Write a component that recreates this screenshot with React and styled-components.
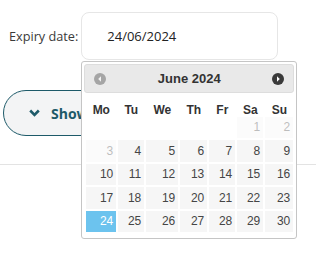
import React from 'react';
import styled, { createGlobalStyle } from 'styled-components';

const GlobalStyle = createGlobalStyle`
  body {
    margin: 0;
    background: #ffffff;
    font-family: "Open Sans", "Liberation Sans", sans-serif;
  }
`;

const Page = styled.div`
  position: relative;
  width: 316px;
  height: 265px;
  overflow: hidden;
`;

const FieldRow = styled.div`
  display: flex;
  align-items: center;
  gap: 3px;
  padding: 12px 0 0 9px;
`;

const Label = styled.label`
  font-size: 12.7px;
  color: #3a3a3a;
`;

const DateField = styled.div`
  position: relative;
`;

const DateInput = styled.div`
  box-sizing: border-box;
  width: 197px;
  height: 48px;
  display: flex;
  align-items: center;
  padding-left: 25px;
  border: 1px solid #e6e6e6;
  border-radius: 8px;
  font-size: 13px;
  color: #222;
`;

const ShowButton = styled.button`
  box-sizing: border-box;
  display: flex;
  align-items: center;
  gap: 11px;
  margin: 30px 0 0 3px;
  height: 46px;
  width: 160px;
  padding: 0 0 0 25px;
  border: 1px solid #1d5a69;
  border-radius: 23px;
  background: #f3f4f5;
  color: #1d5a69;
  font-family: "Open Sans", sans-serif;
  font-weight: 700;
  font-size: 14px;
`;

const Rule = styled.hr`
  margin: 28px 0 0;
  border: 0;
  border-top: 1px solid #e3e3e3;
`;

const Picker = styled.div`
  position: absolute;
  top: 49px;
  left: 0;
  box-sizing: border-box;
  width: 216px;
  padding: 2px 2px 6px;
  border: 1px solid #c5c5c5;
  border-radius: 3px;
  background: #fff;
  font-family: "Liberation Sans", Arial, sans-serif;
  z-index: 2;
`;

const PickerHeader = styled.div`
  box-sizing: border-box;
  height: 29px;
  display: flex;
  align-items: center;
  justify-content: space-between;
  padding: 0 9px;
  border: 1px solid #dddddd;
  border-radius: 3px;
  background: #e9e9e9;
  color: #333;
`;

const Title = styled.span`
  font-size: 13px;
  font-weight: 700;
`;

const NavIcon = styled.span`
  display: inline-flex;
  opacity: ${(p) => (p.disabled ? 0.45 : 1)};
`;

const Grid = styled.div`
  display: grid;
  grid-template-columns: 30px 26px 32px 27px 26px 26px 28px;
  grid-auto-rows: 21.5px;
  gap: 2px;
  margin: 0 0 0 2px;
  font-size: 12px;
`;

const DayName = styled.div`
  height: 34px;
  display: flex;
  align-items: center;
  justify-content: center;
  font-weight: 700;
  color: #333;
  margin-bottom: -1px;
`;

const DayCell = styled.div`
  display: flex;
  align-items: center;
  justify-content: flex-end;
  padding-right: 3px;
  background: ${(p) => (p.active ? '#6cc3ee' : '#f6f6f6')};
  color: ${(p) => (p.active ? '#ffffff' : '#454545')};
  opacity: ${(p) => (p.disabled ? 0.35 : 1)};
`;

const Blank = styled.div``;

const Arrow = ({ dir, color }) => (
  <svg width="12" height="12" viewBox="0 0 12 12">
    <circle cx="6" cy="6" r="6" fill={color} />
    {dir === 'left' ? (
      <path d="M7 3.2 L4.2 6 L7 8.8 Z" fill="#fff" />
    ) : (
      <path d="M5 3.2 L7.8 6 L5 8.8 Z" fill="#fff" />
    )}
  </svg>
);

const Chevron = () => (
  <svg width="11" height="8" viewBox="0 0 11 8">
    <path d="M1.2 1.5 L5.5 5.8 L9.8 1.5" fill="none" stroke="#1d5a69" strokeWidth="2.6" />
  </svg>
);

const DAYS = ['Mo', 'Tu', 'We', 'Th', 'Fr', 'Sa', 'Su'];

const App = () => {
  const cells = [];
  for (let i = 0; i < 5; i++) cells.push(<Blank key={`b${i}`} />);
  for (let d = 1; d <= 30; d++) {
    cells.push(
      <DayCell key={d} disabled={d < 4} active={d === 24}>
        {d}
      </DayCell>
    );
  }

  return (
    <Page>
      <GlobalStyle />
      <FieldRow>
        <Label>Expiry date:</Label>
        <DateField>
          <DateInput>24/06/2024</DateInput>
          <Picker>
            <PickerHeader>
              <NavIcon disabled>
                <Arrow dir="left" color="#555" />
              </NavIcon>
              <Title>June 2024</Title>
              <NavIcon>
                <Arrow dir="right" color="#3a3a3a" />
              </NavIcon>
            </PickerHeader>
            <Grid>
              {DAYS.map((d) => (
                <DayName key={d}>{d}</DayName>
              ))}
              {cells}
            </Grid>
          </Picker>
        </DateField>
      </FieldRow>
      <ShowButton>
        <Chevron />
        Show
      </ShowButton>
      <Rule />
    </Page>
  );
};

export default App;
